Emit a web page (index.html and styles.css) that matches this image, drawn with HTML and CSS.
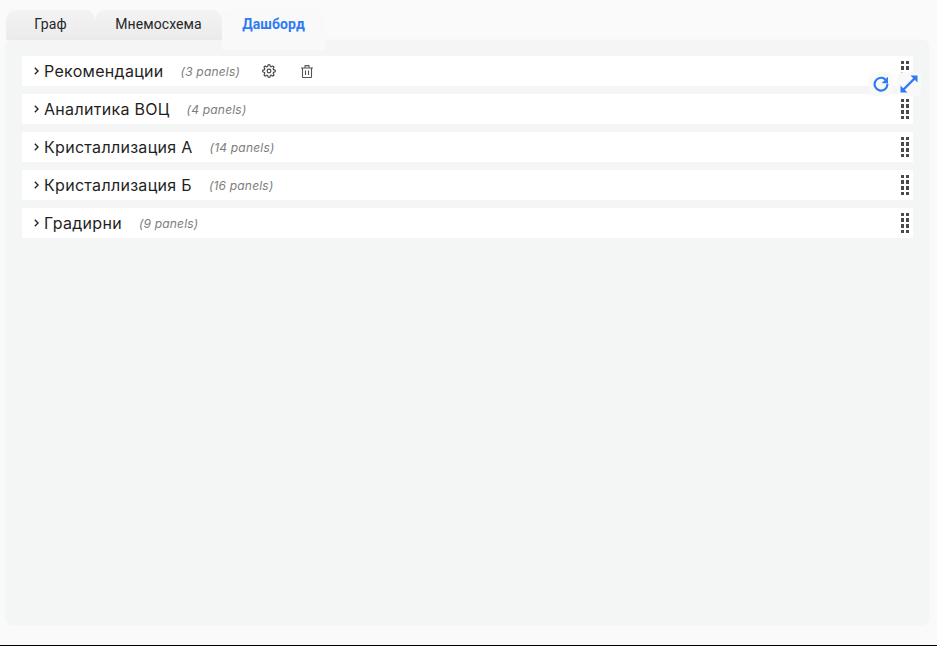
FILE: index.html
```html
<!DOCTYPE html>
<html lang="ru">
<head>
<meta charset="utf-8">
<title>Дашборд</title>
<link rel="stylesheet" href="styles.css">
</head>
<body>
<div class="app">
  <nav class="tabs">
    <div class="tab tab-graph">Граф</div>
    <div class="tab tab-mnemo">Мнемосхема</div>
    <div class="tab tab-active">Дашборд</div>
  </nav>
  <main class="board">
    <section class="row">
      <svg class="chev" viewBox="0 0 5 8" width="5" height="8" fill="none" stroke="#262626" stroke-width="1.400"><path d="M.8.8 4 4 .8 7.200"/></svg><span class="title">Рекомендации</span><span class="count count-first">(3 panels)</span>
      <svg class="act act-gear" viewBox="0 0 24 24" width="14" height="14" fill="none" stroke="#444" stroke-width="2" stroke-linejoin="round"><circle cx="12" cy="12" r="3.200"/><path d="M19.400 15a1.650 1.650 0 0 0 .33 1.820l.06.06a2 2 0 0 1 0 2.830 2 2 0 0 1-2.830 0l-.06-.06a1.650 1.650 0 0 0-1.820-.33 1.650 1.650 0 0 0-1 1.510V21a2 2 0 0 1-2 2 2 2 0 0 1-2-2v-.09A1.650 1.650 0 0 0 9 19.400a1.650 1.650 0 0 0-1.820.33l-.06.06a2 2 0 0 1-2.830 0 2 2 0 0 1 0-2.830l.06-.06a1.650 1.650 0 0 0 .33-1.820 1.650 1.650 0 0 0-1.510-1H3a2 2 0 0 1-2-2 2 2 0 0 1 2-2h.09A1.650 1.650 0 0 0 4.600 9a1.650 1.650 0 0 0-.33-1.820l-.06-.06a2 2 0 0 1 0-2.830 2 2 0 0 1 2.830 0l.06.06a1.650 1.650 0 0 0 1.820.33H9a1.650 1.650 0 0 0 1-1.510V3a2 2 0 0 1 2-2 2 2 0 0 1 2 2v.09a1.650 1.650 0 0 0 1 1.510 1.650 1.650 0 0 0 1.820-.33l.06-.06a2 2 0 0 1 2.830 0 2 2 0 0 1 0 2.830l-.06.06a1.650 1.650 0 0 0-.33 1.820V9a1.650 1.650 0 0 0 1.510 1H21a2 2 0 0 1 2 2 2 2 0 0 1-2 2h-.09a1.650 1.650 0 0 0-1.510 1z"/></svg>
      <svg class="act act-trash" viewBox="0 0 12 13" width="12" height="13" fill="none" stroke="#555" stroke-width="1.100" stroke-linejoin="round"><path d="M0 3h12M4 3V.6h4V3M1.500 3v9a.6.6 0 0 0 .6.6h7.800a.6.6 0 0 0 .6-.6V3M4.500 5.500v4.500M7.500 5.500v4.500"/></svg>
      <span class="grip"><i></i><i></i><i></i><i></i><i></i><i></i><i></i><i></i></span>
    </section>
    <section class="row">
      <svg class="chev" viewBox="0 0 5 8" width="5" height="8" fill="none" stroke="#262626" stroke-width="1.400"><path d="M.8.8 4 4 .8 7.200"/></svg><span class="title">Аналитика ВОЦ</span><span class="count">(4 panels)</span>
      <span class="grip"><i></i><i></i><i></i><i></i><i></i><i></i><i></i><i></i></span>
    </section>
    <section class="row">
      <svg class="chev" viewBox="0 0 5 8" width="5" height="8" fill="none" stroke="#262626" stroke-width="1.400"><path d="M.8.8 4 4 .8 7.200"/></svg><span class="title">Кристаллизация А</span><span class="count">(14 panels)</span>
      <span class="grip"><i></i><i></i><i></i><i></i><i></i><i></i><i></i><i></i></span>
    </section>
    <section class="row">
      <svg class="chev" viewBox="0 0 5 8" width="5" height="8" fill="none" stroke="#262626" stroke-width="1.400"><path d="M.8.8 4 4 .8 7.200"/></svg><span class="title">Кристаллизация Б</span><span class="count">(16 panels)</span>
      <span class="grip"><i></i><i></i><i></i><i></i><i></i><i></i><i></i><i></i></span>
    </section>
    <section class="row">
      <svg class="chev" viewBox="0 0 5 8" width="5" height="8" fill="none" stroke="#262626" stroke-width="1.400"><path d="M.8.8 4 4 .8 7.200"/></svg><span class="title">Градирни</span><span class="count">(9 panels)</span>
      <span class="grip"><i></i><i></i><i></i><i></i><i></i><i></i><i></i><i></i></span>
    </section>
  </main>
  <div class="floating">
    <button class="fab"><svg viewBox="0 0 16 16" width="16" height="16" fill="none" stroke="#2f7bf5" stroke-width="2.200" stroke-linecap="round"><path d="M14.400 8.500A6.400 6.400 0 1 1 11.800 3"/><path d="M15 .8v6.400H8.600z" fill="#2f7bf5" stroke="none"/></svg></button>
    <button class="fab"><svg viewBox="0 0 18 18" width="18" height="18" fill="none" stroke="#2f7bf5" stroke-width="2.400"><path d="M3.500 14.500l11-11"/><path d="M10.500 .5H17.500V7.500zM.5 10.500V17.500H7.500z" fill="#2f7bf5" stroke="none"/></svg></button>
  </div>
</div>
</body>
</html>
```
FILE: styles.css
```css
* { box-sizing: border-box; }
html, body { margin: 0; height: 100%; }
body { background: #fafafa; overflow: hidden; font-family: "Roboto", sans-serif; }
.app {
  position: relative;
  height: 646px;
  padding: 10px 8px 0 6px;
  border-bottom: 1px solid #000;
  display: flex;
  flex-direction: column;
}
.tabs { display: flex; height: 30px; font-size: 14px; color: #262626; letter-spacing: .1px; }
.tab {
  height: 30px;
  border-radius: 10px 10px 0 0;
  background: linear-gradient(#f3f3f3, #ebebeb);
  text-align: center;
  line-height: 29px;
}
.tab-graph { width: 89px; }
.tab-mnemo { width: 127px; }
.tab-active {
  width: 103px;
  height: 40px;
  position: relative;
  z-index: 1;
  background: #f9f9f9;
  color: #2f7bf5;
  font-weight: 700;
}
.board {
  height: 585px;
  background: #f4f6f6;
  border-radius: 6px;
  padding: 16px 16px 0;
  display: flex;
  flex-direction: column;
  gap: 8px;
  box-shadow: 0 0 4px rgba(0, 0, 0, .02);
}
.row {
  height: 30px;
  background: #fff;
  display: flex;
  align-items: center;
  padding-left: 12px;
  position: relative;
  color: #1f1f1f;
}
.chev { flex: none; margin-right: 5px; }
.title { font: 400 16px/24px "Inter", sans-serif; letter-spacing: .3px; margin-right: 17px; }
.count { font: italic 400 12px/16px "Inter", sans-serif; color: #7d7d7d; letter-spacing: .2px; position: relative; top: 1px; }
.act { flex: none; }
.act-gear { margin-left: 22px; }
.act-trash { margin-left: 25px; }
.grip {
  margin-left: auto;
  margin-right: 4px;
  display: grid;
  grid-template-columns: 3.500px 3.500px;
  column-gap: 1.500px;
  row-gap: 2.170px;
  grid-auto-rows: 3.500px;
}
.grip i { background: #4a4a4a; display: block; }
.floating {
  position: absolute;
  top: 72px;
  left: 869px;
  display: flex;
  gap: 4px;
}
.fab {
  width: 24px;
  height: 24px;
  padding: 0;
  border: 0;
  border-radius: 6px;
  background: #f9f9f9;
  display: flex;
  align-items: center;
  justify-content: center;
}
```
